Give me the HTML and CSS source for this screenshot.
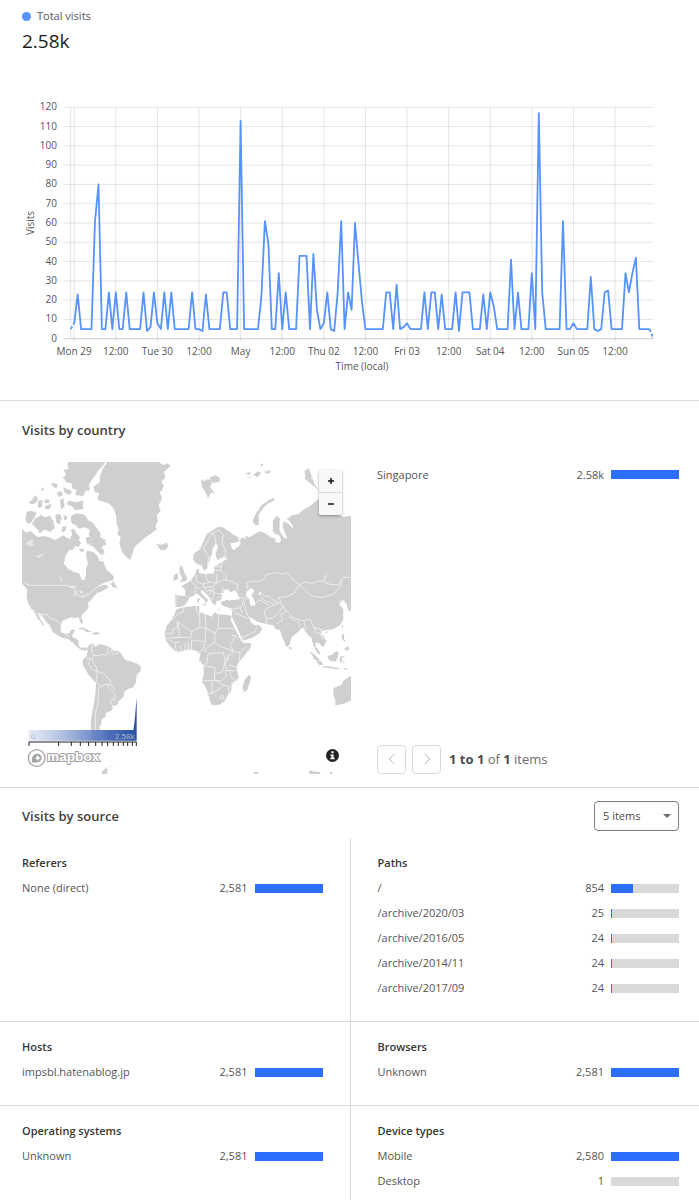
FILE: index.html
```html
<!DOCTYPE html>
<html lang="en">
<head>
<meta charset="utf-8">
<meta name="viewport" content="width=device-width, initial-scale=1">
<title>Web analytics</title>
<link rel="stylesheet" href="styles.css">
</head>
<body>
<main>
  <section class="summary">
    <p class="legend"><span class="dot"></span>Total visits</p>
    <p class="total">2.58k</p>
    <svg class="chart" viewBox="22 98 656 278" role="img" aria-label="Visits over time">
      <g id="grid" class="grid"></g>
      <g id="labels" class="labels"></g>
      <g id="series" class="series"></g>
    </svg>
  </section>

  <section class="country">
    <h2>Visits by country</h2>
    <div class="country-body">
      <div class="map">
        <svg viewBox="36 36 987 935" role="img" aria-label="World map of visits">
          <defs>
            <filter id="coast" x="-5%" y="-5%" width="110%" height="110%">
              <feTurbulence type="fractalNoise" baseFrequency="0.3" numOctaves="2" seed="4" result="n"/>
              <feDisplacementMap in="SourceGraphic" in2="n" scale="6" xChannelSelector="R" yChannelSelector="G"/>
            </filter>
            <linearGradient id="scale" x1="0" x2="1" y1="0" y2="0">
              <stop offset="0" stop-color="#e6eaf6"/>
              <stop offset="0.2" stop-color="#c3cee9"/>
              <stop offset="0.5" stop-color="#7e97cf"/>
              <stop offset="0.75" stop-color="#3d60b4"/>
              <stop offset="1" stop-color="#16439f"/>
            </linearGradient>
          </defs>
          <g class="land" filter="url(#coast)">
            <!-- North America -->
            <path d="M20 234L36 238 50 248 62 243 72 252 84 262 100 258 118 262 136 270 150 262 158 256 170 262 180 268 186 252 183 240 192 236 200 250 210 262 206 272 214 280 204 292 196 288 190 298 178 300 166 318 162 342 176 358 192 366 208 370 214 388 222 392 228 376 228 356 234 340 230 326 228 312 232 302 250 306 262 318 268 330 278 338 272 318 284 346 290 360 302 370 312 380 310 390 290 396 272 402 262 412 276 406 290 404 296 412 276 424 262 428 250 440 240 452 234 462 236 472 228 484 216 494 214 502 219 518 215 523 209 512 206 502 196 504 184 502 172 506 160 510 154 518 152 530 154 546 166 552 178 550 184 540 196 538 192 548 186 556 188 562 198 566 206 572 206 586 212 594 224 592 232 596 226 602 214 600 200 590 192 582 176 568 158 563 142 555 128 546 122 532 110 516 98 500 84 490 90 506 104 528 98 526 84 508 76 490 66 478 54 460 50 440 52 420 44 408 20 392Z"/>
            <path d="M302 402L310 392 316 404 322 414 308 412Z"/>
            <path d="M204 536L218 532 234 540 246 546 230 546 216 538ZM248 548L262 546 272 551 258 554 248 553Z"/>
            <!-- Arctic islands -->
            <path d="M180 20H290L284 40 276 50 264 62 256 76 244 92 236 104 240 118 226 124 220 138 196 136 200 120 188 116 184 100 168 96 160 84 168 72 160 60 176 56 172 44Z"/>
            <path d="M172 152L200 156 218 152 220 178 196 180 184 168 172 164Z"/>
            <path d="M184 196L200 190 224 194 236 212 250 220 262 236 272 250 270 262 286 270 288 284 274 290 284 308 276 316 262 304 250 290 238 284 246 268 236 256 240 240 224 232 206 236 196 224 186 222 182 208Z"/>
            <path d="M74 206L92 196 108 202 118 196 130 214 134 234 120 246 104 238 90 250 78 234 66 222Z"/>
            <path d="M50 186L62 182 80 188 74 202 62 218 52 222 46 206Z"/>
            <path d="M56 158L68 148 76 136 84 146 76 162 64 162ZM84 152L98 150 96 170 84 174ZM104 148L120 150 116 160 104 158ZM92 118L104 112 98 124ZM122 102L132 98 144 104 138 116ZM140 130L152 122 160 134 148 142ZM136 194L150 192 156 206 148 224 138 216ZM160 196L172 198 170 210 162 208ZM228 262L242 260 246 276 234 284 228 274ZM206 296L224 298 216 308ZM156 230L170 228 166 244 154 246ZM150 150L160 144 164 168 154 180ZM104 168L124 162 120 176 106 178ZM160 112L186 124 180 134 162 128Z"/>
            <!-- Greenland and Iceland -->
            <path d="M292 20L290 38 278 56 270 80 268 98 250 110 254 126 268 130 262 148 274 154 296 160 310 174 318 196 320 222 326 236 322 252 332 262 328 280 334 302 346 318 360 330 366 316 374 290 388 278 404 264 424 250 440 238 436 228 444 212 440 196 452 182 446 166 456 146 450 128 462 108 454 96 466 82 462 66 482 48 472 40 460 46 446 36 440 20Z"/>
            <path d="M438 282L452 284 470 278 476 288 466 300 450 300 446 292Z"/>
            <!-- South America -->
            <path d="M230 596L238 584 250 580 256 590 268 582 284 586 300 592 312 604 326 602 334 612 346 630 362 634 380 640 393 650 392 662 380 676 378 696 370 712 356 716 344 724 340 740 328 752 322 764 312 768 306 762 308 774 302 784 288 788 286 802 276 806 274 818 268 830 270 842 264 858 268 872 250 870 244 846 242 820 246 790 252 760 256 730 258 700 246 686 234 672 226 656 218 644 218 630 230 618 232 604Z"/>
            <path d="M274 966L284 958 288 950 292 966 292 975H276ZM292 954L304 946 308 944 298 952ZM732 966H744V975H732ZM898 960L904 962 908 964 930 966 932 975H898ZM960 966H968V975H960Z"/>
            <!-- Eurasia -->
            <path d="M610 240L622 232 636 230 648 238 664 250 684 262 688 272 676 278 662 280 664 290 670 300 682 292 692 284 690 270 698 262 708 268 706 258 718 262 738 250 750 244 762 248 772 254 784 262 796 266 796 276 808 278 814 270 808 256 790 250 788 212 800 198 810 206 808 240 820 262 832 266 826 250 818 232 822 214 836 222 850 236 846 222 832 206 846 196 866 192 878 180 900 168 922 150 936 140 926 120 900 100 886 88 884 64 896 54 906 80 914 104 950 150 970 190 1000 200 1040 196V490L1014 480 1010 462 1000 452 986 462 1000 478 1000 510 990 525 970 538 950 540 938 542 932 550 950 572 940 592 928 582 918 575 916 590 926 600 932 615 922 610 912 590 905 565 890 550 878 532 865 545 845 562 838 585 830 592 818 565 810 540 798 538 788 525 768 522 742 515 730 508 718 500 708 490 720 508 725 520 735 526 744 524 757 534 750 548 730 562 700 572 694 562 680 530 665 500 666 490 665 475 650 472 635 465 633 455 650 450 670 450 690 448 682 430 672 420 664 428 655 418 642 420 636 432 635 445 630 452 620 452 618 466 607 460 600 445 590 432 578 422 572 420 575 432 595 450 588 460 582 448 570 438 560 430 550 438 540 442 535 450 525 465 510 472 496 470 495 435 525 438 526 420 515 408 530 400 542 392 555 375 560 360 566 355 568 370 590 372 612 370 612 352 622 345 640 334 655 325 640 322 622 330 616 312 624 290 618 280 608 295 605 315 598 330 592 355 582 362 574 345 558 342 550 330 550 312 570 298 580 275 592 250Z"/>
            <!-- Northern islands -->
            <path d="M572 90L586 92 594 86 606 98 600 112 616 132 604 126 594 146 588 130 576 110ZM600 82L616 76 630 84 628 96 610 98 600 92ZM728 212L740 186 756 164 776 150 792 144 794 150 772 162 756 178 746 196 746 226 734 224ZM706 70L722 66 718 76ZM730 74L744 64 754 70 742 82ZM762 66L780 60 778 72ZM750 44L760 40 758 50ZM712 82L726 80 720 84Z"/>
            <g transform="translate(450 300)">
              <!-- Africa -->
              <path d="M50 178L72 172 100 168 118 168 118 185 135 192 155 200 162 188 175 192 205 196 215 198 212 210 222 230 235 255 245 272 250 280 275 278 272 292 255 315 238 335 230 348 232 365 236 385 215 400 214 420 205 432 195 452 178 464 155 466 148 445 138 415 126 392 132 370 130 345 118 330 120 312 112 305 100 300 85 298 60 305 45 302 30 288 18 272 14 250 20 228 35 208 45 190Z"/>
              <path d="M268 373L273 385 262 420 252 426 248 410 254 390Z"/>
              <!-- British Isles and Mediterranean -->
              <path d="M60 46L68 52 72 65 82 85 78 94 58 97 68 86 60 72 58 58ZM42 75L54 70 54 88 40 92ZM112 146L117 144 117 158 112 158ZM126 162L138 162 136 168ZM168 176L182 177 176 180ZM205 178L213 176 210 181Z"/>
              <!-- South-east Asia and Oceania -->
              <path d="M388 288L395 295 391 300 387 296ZM448 302L465 315 488 340 488 347 478 344 462 325ZM488 348L515 350 540 355 538 358 510 355 488 352ZM502 318L516 314 530 302 536 312 528 335 508 332ZM540 320L556 318 544 326 554 340 544 332 540 344ZM545 254L552 252 552 268 560 276 552 274 546 266ZM552 296L566 288 568 300 558 302ZM545 226L550 224 547 236ZM494 246L504 244 500 250ZM600 372L572 378 562 384 550 392 545 404 520 414 520 432 526 450 526 466 550 462 572 452 600 452ZM548 356L562 354 558 360Z"/>
            </g>
          </g>
          <!-- Lakes and inland seas -->
          <g class="sea">
            <path d="M710 424L724 414 734 424 724 434 732 448 736 466 722 468 718 448 708 438ZM746 428L754 426 752 436Z"/>
          </g>
          <g class="lake">
            <path d="M48 280L60 270 74 272 66 280 74 286 58 290ZM78 318L92 314 104 308 96 320 82 324ZM146 376L152 380 158 396 152 392ZM174 410L188 406 202 412 192 416 180 414ZM192 424L200 418 196 440 190 440ZM204 418L218 422 222 434 212 430ZM212 440L226 436 216 446ZM226 432L238 430 232 436ZM650 622L658 622 656 632 648 632ZM638 322L648 318 650 328ZM938 392L952 364 950 380 942 392Z"/>
          </g>
          <g class="borders">
            <path d="M44 398L56 406H172L190 412 206 438 222 440 240 430 250 420 264 410M80 490L96 494 112 494 122 506 134 508 146 518 152 524M166 562L172 554 178 560"/>
            <path d="M250 582L244 600 250 616 246 630M228 624L242 626 234 642 248 660 262 664 258 700M262 664L280 670 300 690 302 706 288 702 272 710 264 700M266 712L264 760 256 790 256 850M288 702L300 718 312 728 316 738 302 752 304 764M302 706L316 718M250 616L266 618 276 612 284 616 296 610 292 592M304 600L308 614 324 610 326 602M246 630L258 650 262 664M320 748L306 750"/>
            <g transform="translate(450 300)">
              <path d="M72 172L70 185 50 195 35 212M18 250H38V238L52 232V212M52 215L95 245 120 232 118 185M110 168L108 180 118 190M54 215L58 262 20 265M58 262L92 262 95 245M135 192L138 235M120 232L138 235 165 250M175 192V235H222M175 235L165 250V275M138 235L135 275 92 270M95 270V300M135 275L130 300 115 306M165 275L180 290 215 300M165 275L140 295 135 308M215 255L238 262M225 258L210 285 222 305 240 308M260 290L240 308 238 335M215 300L218 312 205 315 195 345 200 360M145 310L190 308M145 310L140 340 130 347 165 352 163 372M190 308L195 330 188 365 165 372 163 392H126M163 392L185 392 200 378 195 362 230 362M208 345L230 352M155 395L157 430 140 432M157 430L175 420 190 405M170 395L190 405 208 410 205 425M75 280V303M62 285V303M85 275V298M45 278L48 300M28 270L45 278 60 275M180 440L188 436 192 444 184 448ZM210 362L212 378 222 390"/>
              <path d="M262 118L260 98 280 92 292 96 312 88 318 75 345 68 370 72 382 68 400 90 418 105 408 118 402 130 380 140 358 142 345 155 328 140 312 138 300 125 296 132M418 105L432 96 455 100 480 92 510 103 535 105 545 90 550 82H580M418 105L440 125 455 138 490 143 520 132 540 112 545 90M358 142L365 165 380 182 395 200 425 212 450 208 462 232 488 240M380 182L362 195 368 210 350 222M312 182L318 205 340 205 362 180 372 165M312 182L330 170 355 160M345 155L360 160M285 160L300 150 325 165 330 170M296 132L312 150 340 162M252 158L262 195M218 178L245 172 250 150M222 188L240 195 262 205M240 172L247 188M248 262L285 245 290 232M385 200L412 216M416 216L418 232M432 214L438 240M462 232L468 248 480 250 490 268M480 238L492 256 496 268M318 205L320 222M240 142L262 148M536 154L556 150"/>
              <path d="M48 140V168M75 138L90 142M92 92L108 110 104 130M110 75L108 95 128 102 148 96M136 72L140 90 148 96 168 100 172 72M128 102L132 112 158 110 170 98M168 100L190 88 220 96 234 105 230 122M162 60L182 62 200 75 196 92M165 48L185 52M182 62L186 38M132 112L140 124 152 118 162 130M158 110L164 130 184 132M190 110L186 124M152 118L150 135M162 130L158 150M108 110L120 116M170 146L184 138"/>
            </g>
            <path d="M592 354L596 320 580 296 604 252 626 240M618 282L614 256 604 250M626 240L640 256 636 280 648 306 640 322"/>
          </g>
          <!-- Value scale -->
          <path d="M56 840H370L374 812 380 742V872H56Z" fill="url(#scale)" fill-opacity="0.92"/>
          <path class="axis" d="M57 888V876H379V888M146 876V888M184 876V888M211 876V888M236 876V888M257 876V888M276 876V888M293 876V888M310 876V888M325 876V888M340 876V888M353 876V888M367 876V888"/>
          <text class="scale-text" x="62" y="868">0</text>
          <text class="scale-text" x="374" y="868" text-anchor="end">2.58k</text>
          <!-- Map provider logo -->
          <g class="brand">
            <circle cx="80" cy="924" r="25"/>
            <path class="pin" d="M66 937C63 922 70 911 82 911 90 911 95 917 95 924 95 935 82 940 66 937Z"/>
            <path class="spark" d="M83 915L86 921 92 924 86 927 83 933 80 927 74 924 80 921Z"/>
            <text x="111" y="934">mapbox</text>
          </g>
        </svg>
        <div class="zoom">
          <button type="button" aria-label="Zoom in"><svg viewBox="0 0 8 8"><path d="M4 1V7M1 4H7"/></svg></button>
          <button type="button" aria-label="Zoom out"><svg viewBox="0 0 8 8"><path d="M1 4H7"/></svg></button>
        </div>
        <button type="button" class="info" aria-label="Map attribution">
          <svg viewBox="0 0 12 12"><circle cx="6" cy="6" r="6" fill="#222"/><path d="M5 2H7V4H5ZM4 5H7V8H8V9.500H4V8H5V6.300H4Z" fill="#fff"/></svg>
        </button>
      </div>
      <div class="country-list">
        <table class="stats">
          <tr><th scope="row">Singapore</th><td>2.58k</td><td class="bar"><span class="track"><span class="fill" style="width:100%"></span></span></td></tr>
        </table>
        <nav class="pager" aria-label="Pages">
          <button type="button" aria-label="Previous page" disabled><svg viewBox="0 0 14 14"><path d="M9.500 2L4 7 9.500 12"/></svg></button>
          <button type="button" aria-label="Next page" disabled><svg viewBox="0 0 14 14"><path d="M4.500 2L10 7 4.500 12"/></svg></button>
          <p><b>1 to 1</b> of <b>1</b> items</p>
        </nav>
      </div>
    </div>
  </section>

  <section class="source">
    <header>
      <h2>Visits by source</h2>
      <div class="select">
        <select aria-label="Items per list"><option>5 items</option><option>10 items</option></select>
        <svg viewBox="0 0 8 4"><path d="M0 0H8L4 4Z"/></svg>
      </div>
    </header>
    <div class="panels">
      <div class="panel">
        <h3>Referers</h3>
        <table class="stats">
          <tr><th scope="row">None (direct)</th><td>2,581</td><td class="bar"><span class="track"><span class="fill" style="width:100%"></span></span></td></tr>
        </table>
      </div>
      <div class="panel">
        <h3>Paths</h3>
        <table class="stats">
          <tr><th scope="row">/</th><td>854</td><td class="bar"><span class="track"><span class="fill" style="width:33%"></span></span></td></tr>
          <tr><th scope="row">/archive/2020/03</th><td>25</td><td class="bar"><span class="track"><span class="fill" style="width:1%"></span></span></td></tr>
          <tr><th scope="row">/archive/2016/05</th><td>24</td><td class="bar"><span class="track"><span class="fill" style="width:1%"></span></span></td></tr>
          <tr><th scope="row">/archive/2014/11</th><td>24</td><td class="bar"><span class="track"><span class="fill" style="width:1%"></span></span></td></tr>
          <tr><th scope="row">/archive/2017/09</th><td>24</td><td class="bar"><span class="track"><span class="fill" style="width:1%"></span></span></td></tr>
        </table>
      </div>
      <div class="panel">
        <h3>Hosts</h3>
        <table class="stats">
          <tr><th scope="row">impsbl.hatenablog.jp</th><td>2,581</td><td class="bar"><span class="track"><span class="fill" style="width:100%"></span></span></td></tr>
        </table>
      </div>
      <div class="panel">
        <h3>Browsers</h3>
        <table class="stats">
          <tr><th scope="row">Unknown</th><td>2,581</td><td class="bar"><span class="track"><span class="fill" style="width:100%"></span></span></td></tr>
        </table>
      </div>
      <div class="panel">
        <h3>Operating systems</h3>
        <table class="stats">
          <tr><th scope="row">Unknown</th><td>2,581</td><td class="bar"><span class="track"><span class="fill" style="width:100%"></span></span></td></tr>
        </table>
      </div>
      <div class="panel">
        <h3>Device types</h3>
        <table class="stats">
          <tr><th scope="row">Mobile</th><td>2,580</td><td class="bar"><span class="track"><span class="fill" style="width:100%"></span></span></td></tr>
          <tr><th scope="row">Desktop</th><td>1</td><td class="bar"><span class="track"><span class="fill" style="width:0%"></span></span></td></tr>
        </table>
      </div>
    </div>
  </section>
</main>
<script src="chart.js"></script>
</body>
</html>
```
FILE: styles.css
```css
* { box-sizing: border-box; }

body {
  margin: 0;
  background: #fff;
  color: #555;
  font: 11px/18px "Open Sans", "Noto Sans", sans-serif;
}

main { overflow: hidden; }
h2, h3, p { margin: 0; }
svg { display: block; }
button { padding: 0; cursor: pointer; }

h2 {
  color: #404040;
  font-size: 13px;
  font-weight: 600;
  line-height: 20px;
}

h3 {
  color: #363636;
  font-size: 11px;
  font-weight: 600;
  line-height: 18px;
}

.summary {
  padding: 7px 21px 24px 22px;
  border-bottom: 1px solid #d9d9d9;
}

.legend { display: flex; align-items: center; gap: 6px; font-size: 11px; }
.dot { width: 9px; height: 9px; border-radius: 50%; background: #5693ff; }

.total {
  color: #1d1d1d;
  font-size: 19px;
  font-weight: 500;
  line-height: 32px;
  margin-bottom: 41px;
}

.chart { width: 100%; height: auto; }
.grid { stroke: #000; stroke-opacity: 0.1; }
.grid .base { stroke-opacity: 0.2; }
.labels { fill: #555; font-size: 10px; }
.series { fill: none; stroke: #5693ff; stroke-width: 1.800; stroke-linejoin: round; }
.series .partial { stroke-dasharray: 3 2; }

.country {
  padding: 19px 20px 13px 22px;
  border-bottom: 1px solid #d9d9d9;
}

.country-body {
  display: grid;
  grid-template-columns: 329fr 302fr;
  gap: 26px;
  margin-top: 22px;
}

.map { position: relative; }
.map > svg { width: 100%; height: auto; overflow: hidden; }
.land { fill: #cfcfcf; }
.sea { fill: #fff; }
.lake { fill: #e6e6e6; }
.borders { fill: none; stroke: #ededed; stroke-width: 3; stroke-linejoin: round; }
.axis { fill: none; stroke: #222; stroke-width: 3; }
.scale-text { fill: #b3b7c0; font: 24px "Liberation Sans", sans-serif; }

.brand { fill: #fff; stroke: #a3a3a3; stroke-width: 4; }
.brand .pin { fill: #a3a3a3; stroke: none; }
.brand .spark { stroke: none; }
.brand text {
  font: 700 41px "Liberation Sans", sans-serif;
  stroke-width: 6;
  paint-order: stroke;
}

.zoom {
  position: absolute;
  top: 8px;
  right: 9px;
  display: flex;
  flex-direction: column;
  width: 23px;
  background: #f8f8f8;
  border-radius: 2px;
  box-shadow: 0 1px 3px rgba(0, 0, 0, 0.35);
}

.zoom button {
  display: grid;
  place-items: center;
  height: 22px;
  border: 0;
  background: none;
}

.zoom button + button { height: 23px; border-top: 1px solid #ddd; }
.zoom svg { width: 8px; height: 8px; fill: none; stroke: #111; stroke-width: 1.500; }

.info {
  position: absolute;
  right: 12px;
  bottom: 12px;
  border: 0;
  background: none;
}

.info svg { width: 13px; height: 13px; }

.country-list {
  display: flex;
  flex-direction: column;
  justify-content: space-between;
}

.pager { display: flex; align-items: center; gap: 6px; font-size: 13px; }

.pager button {
  display: grid;
  place-items: center;
  width: 29px;
  height: 29px;
  border: 1px solid #d9d9d9;
  border-radius: 4px;
  background: #fff;
}

.pager svg { width: 14px; height: 14px; fill: none; stroke: #b9b9b9; }
.pager p { margin-left: 2px; color: #6b6b6b; }
.pager b { color: #4a4a4a; }

.stats { width: 100%; border-collapse: collapse; }
.stats th, .stats td { height: 25px; padding: 0; vertical-align: middle; }
.stats th { font-weight: 400; text-align: left; }
.stats td { text-align: right; }
.stats .bar { width: 75px; padding-left: 7px; }
.track { display: block; height: 9px; background: #d9d9d9; }
.fill { display: block; height: 100%; background: #2c6fff; }

.source header {
  display: flex;
  align-items: center;
  justify-content: space-between;
  padding: 13px 20px 7px 22px;
}

.select { position: relative; }

.select select {
  appearance: none;
  width: 85px;
  height: 30px;
  padding: 0 8px;
  border: 1px solid #7d7d7d;
  border-radius: 4px;
  background: #fff;
  color: #4a4a4a;
  font: inherit;
}

.select svg {
  position: absolute;
  top: 13px;
  right: 8px;
  width: 8px;
  height: 4px;
  fill: #6b6b6b;
  pointer-events: none;
}

.panels { display: grid; grid-template-columns: 1fr 1fr; }
.panel { padding: 16px 27px 20px 22px; border-bottom: 1px solid #d9d9d9; }

.panel:nth-child(even) {
  padding-right: 20px;
  padding-left: 27px;
  border-left: 1px solid #d9d9d9;
}

.panel:nth-last-child(-n+2) { border-bottom: 0; }
.panel h3 { margin-bottom: 4px; }
```
FILE: chart.js
```js
const HOUR = 3.467;
const X0 = 74.2;
const Y0 = 338.7;
const UNIT = 1.928;

// [visits, consecutive hours], starting one hour before Monday midnight
const runs = [
  [5], [8], [23], [5, 4], [61], [80], [5, 2], [24], [5], [24], [5, 2], [24], [5, 4], [24], [4], [6], [24],
  [8], [5], [24], [5], [24], [5, 5], [24], [5, 2], [4], [23], [5, 4], [24, 2], [5, 3],
  [113], [5, 5], [22], [61], [49], [5, 2], [34], [5], [24], [5, 3], [43, 3], [5], [44], [15], [5],
  [8], [24], [5], [4], [24], [61], [5], [24], [15], [60], [39], [19], [5, 6], [24, 2], [5], [28], [5], [6],
  [8], [5, 4], [24], [5], [24, 2], [5], [23], [5, 3], [24], [4], [24, 3], [5, 3], [23], [5],
  [24], [17], [5, 4], [41], [5], [24], [5, 3], [34], [5], [117], [24], [5, 5], [61], [5, 2],
  [8], [5, 4], [32], [5], [4], [5], [24], [25], [5, 4], [34], [24], [34], [42], [5, 4], [0]
];
const values = runs.flatMap(([v, n = 1]) => Array(n).fill(v));
const points = values.map((v, i) => `${(X0 + HOUR * (i - 1)).toFixed(1)},${(Y0 - UNIT * v).toFixed(1)}`);

const NS = 'http://www.w3.org/2000/svg';
function add(parent, name, attrs, text) {
  const el = document.createElementNS(NS, name);
  for (const key in attrs) el.setAttribute(key, attrs[key]);
  if (text) el.textContent = text;
  document.getElementById(parent).append(el);
}

for (let v = 0; v <= 120; v += 10) {
  const y = Y0 - UNIT * v;
  add('grid', 'path', { d: `M63.500 ${y}H653.500`, class: v ? '' : 'base' });
  add('labels', 'text', { x: 57, y: y + 3, 'text-anchor': 'end' }, String(v));
}

add('grid', 'path', { d: `M${X0 - HOUR} 107V338` });
['Mon 29', '', 'Tue 30', '', 'May', '', 'Thu 02', '', 'Fri 03', '', 'Sat 04', '', 'Sun 05', ''].forEach((day, i) => {
  const x = X0 + i * 12 * HOUR;
  add('grid', 'path', { d: `M${x} 107V342` });
  add('labels', 'text', { x, y: 355, 'text-anchor': 'middle' }, day || '12:00');
});
add('labels', 'text', { x: 362, y: 370, 'text-anchor': 'middle' }, 'Time (local)');
add('labels', 'text', { transform: 'translate(34 223) rotate(-90)', 'text-anchor': 'middle' }, 'Visits');

add('series', 'polyline', { points: points.slice(0, 2).join(' '), class: 'partial' });
add('series', 'polyline', { points: points.slice(1, -1).join(' ') });
add('series', 'polyline', { points: points.slice(-2).join(' '), class: 'partial' });
```
